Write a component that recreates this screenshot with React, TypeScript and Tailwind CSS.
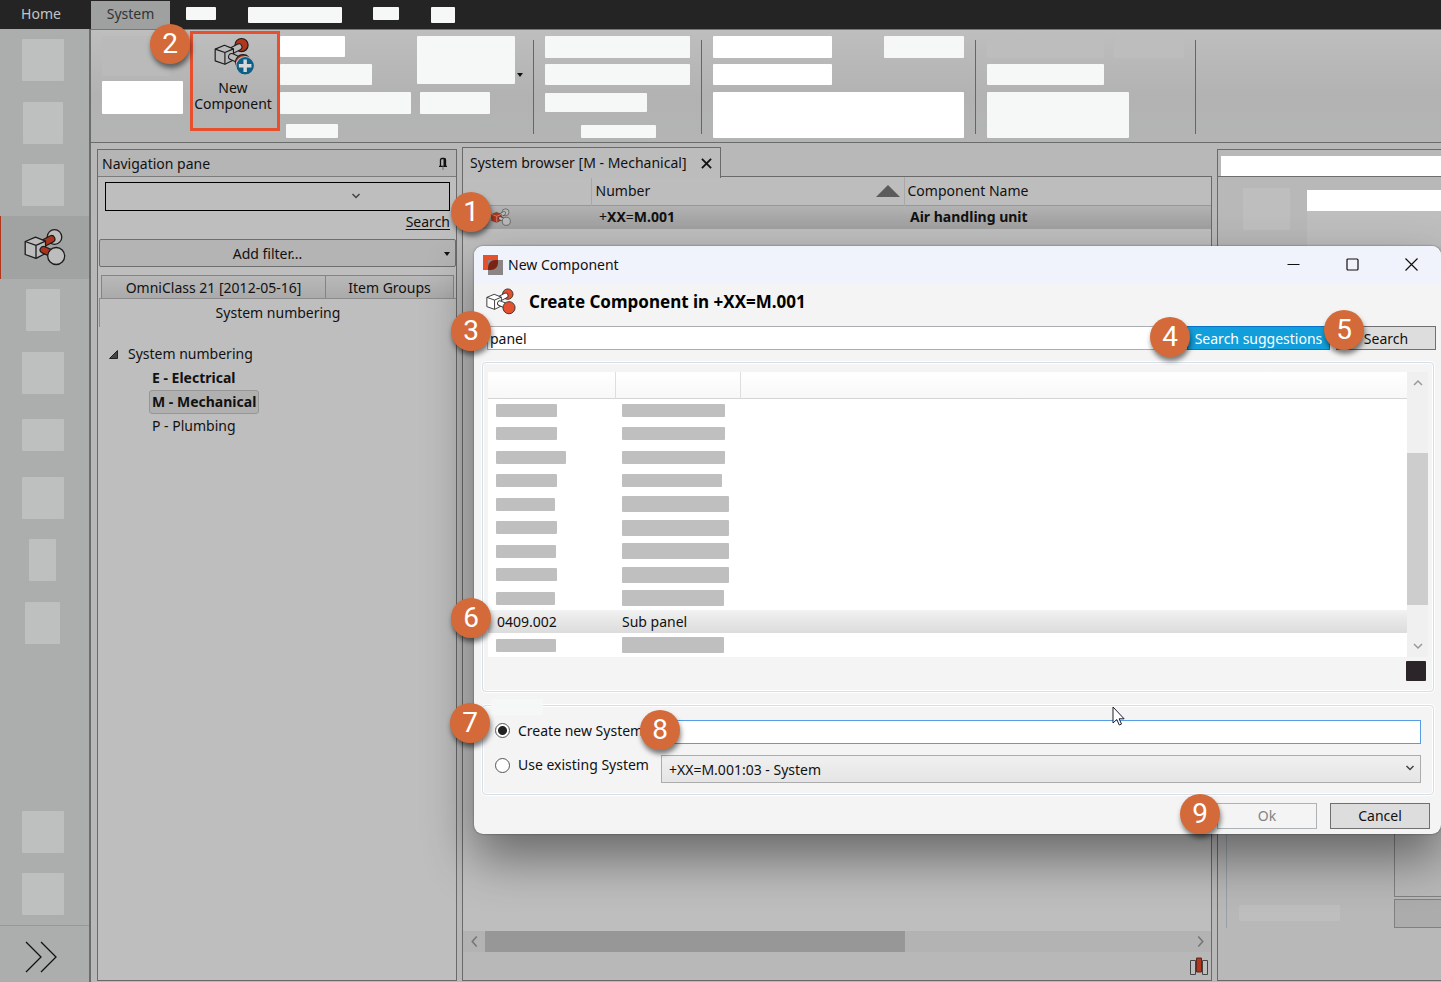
import React from "react";

type IconProps = {
  className?: string;
  cube: string;
  rod: string;
  topBall: string;
  bottomBall: string;
  edge?: string;
  mark?: string;
  add?: boolean;
};

function ComponentIcon({ className, cube, rod, topBall, bottomBall, edge = "#1c1c1c", mark, add }: IconProps) {
  return (
    <svg viewBox="0 0 42 40" className={className} fill="none" strokeLinejoin="round" overflow="visible" aria-hidden="true">
      <circle cx="30.5" cy="9" r="7.3" fill={topBall} stroke={edge} strokeWidth="1.3" />
      <path d="m19 15.500 8.500-4.500" stroke={edge} strokeWidth="8" strokeLinecap="round" />
      <path d="m19 15.500 8.500-4.500" stroke={rod} strokeWidth="5.600" strokeLinecap="round" />
      <path d="M1.200 13.500 11.500 9.200 21.500 13.200V25.500L12 30.300 1.200 26.500Z" fill={cube} stroke={edge} strokeWidth="1.3" />
      <path d="M1.200 13.500 12 17.300 21.500 13.200M12 17.300V30.300" stroke={mark ?? edge} strokeWidth="1.3" />
      <path d="m19.500 21.800 8.500 3.700" stroke={edge} strokeWidth="8" strokeLinecap="round" />
      <path d="m19.500 21.800 8.500 3.700" stroke={rod} strokeWidth="5.600" strokeLinecap="round" />
      <circle cx="32.2" cy="28" r="8.5" fill={bottomBall} stroke={edge} strokeWidth="1.3" />
      {add && (
        <g>
          <circle cx="34.500" cy="32" r="10.300" fill="#0d5f86" stroke="#bababa" strokeWidth="1.2" />
          <path d="M34.500 25v14M27.500 32h14" stroke="#d5d9db" strokeWidth="3.8" />
        </g>
      )}
    </svg>
  );
}

function Chevron({ className, d }: { className: string; d: string }) {
  return (
    <svg viewBox="0 0 10 10" className={className} fill="none" stroke="currentColor" strokeWidth="1.5" aria-hidden="true">
      <path d={d} />
    </svg>
  );
}

function Caret({ className }: { className: string }) {
  return (
    <svg viewBox="0 0 6 4" className={className} aria-hidden="true">
      <path d="M0 0h6L3 4Z" fill="#111" />
    </svg>
  );
}

function Badge({ n, className }: { n: number; className: string }) {
  return (
    <span
      className={`absolute z-20 flex size-10 items-center justify-center rounded-full bg-[#d46a39] font-[Roboto,sans-serif] text-[28px] leading-none text-white shadow-[1px_4px_5px_rgba(0,0,0,0.5)] ${className}`}
    >
      {n}
    </span>
  );
}

const Block = ({ className }: { className: string }) => <div className={`shrink-0 rounded-[1px] ${className}`} />;

const Divider = () => <div className="mt-[10px] h-[94px] w-px shrink-0 bg-[#666]" />;

const sideSlots = [
  "h-[42px] w-[42px]",
  "h-[42px] w-[40px]",
  "h-[42px] w-[42px]",
  "active",
  "h-[42px] w-[34px]",
  "h-[42px] w-[42px]",
  "h-[32px] w-[42px]",
  "h-[42px] w-[42px]",
  "h-[42px] w-[27px]",
  "h-[42px] w-[35px]",
];

function Sidebar() {
  return (
    <nav className="flex w-[91px] shrink-0 flex-col border-r-2 border-[#6b6d6d] bg-[#abaead]">
      {sideSlots.map((s, i) =>
        s === "active" ? (
          <button
            key={i}
            aria-label="Components"
            className="flex h-[63px] items-center justify-center border-l border-[#b0361c] bg-[#a0a3a2]"
          >
            <ComponentIcon className="h-10 w-[42px]" cube="#bdbdbd" rod="#ab341c" topBall="#bdbdbd" bottomBall="#bdbdbd" />
          </button>
        ) : (
          <div key={i} className="flex items-center justify-center pr-1 odd:h-[62px] even:h-[63px]">
            <Block className={`bg-[#bebfbf] ${s}`} />
          </div>
        )
      )}
      <div className="mt-auto flex h-[62px] items-center justify-center pr-1">
        <Block className="size-[42px] bg-[#bebfbf]" />
      </div>
      <div className="flex h-[62px] items-center justify-center pr-1">
        <Block className="size-[42px] bg-[#bebfbf]" />
      </div>
      <button aria-label="Expand" className="flex h-[57px] items-center border-t border-[#969998] pt-[6px] pl-[25px]">
        <svg viewBox="0 0 32 32" className="size-8" fill="none" stroke="#111" strokeWidth="1.3" aria-hidden="true">
          <path d="m1 1 15 15L1 31M16 1l15 15-15 15" />
        </svg>
      </button>
    </nav>
  );
}

function Ribbon() {
  return (
    <div className="flex h-[114px] shrink-0 border-t border-b border-t-[#777] border-b-[#6a6c6b] bg-linear-to-b from-[#bebebe] via-[#b2b2b2] via-60% to-[#b3b5b4]">
      <div className="flex w-[99px] flex-col gap-[5px] pt-[6px] pl-[11px]">
        <Block className="h-10 w-[68px] bg-[#bababa]" />
        <Block className="h-[33px] w-[81px] bg-white" />
      </div>
      <div className="relative mt-px h-[100px] w-[90px] shrink-0">
        <button className="flex size-full flex-col items-center justify-start border-[3px] border-[#e6502f] pt-[3px] pr-1 text-center">
          <ComponentIcon
            className="h-9 w-[38px]"
            cube="#bababa"
            rod="#bababa"
            topBall="#b0361c"
            bottomBall="#b0361c"
            add
          />
          <span className="mt-[7px] flex flex-col items-center leading-4">
            <span>New</span>
            <span>Component</span>
          </span>
        </button>
        <Badge n={2} className="top-[-7px] left-[-40px]" />
      </div>
      <div className="flex w-[137px] flex-col pt-[6px]">
        <Block className="h-[21px] w-[65px] bg-white" />
        <Block className="mt-[7px] h-[21px] w-[92px] bg-[#f6f8f7]" />
        <Block className="mt-[7px] h-[22px] w-[131px] bg-[#f6f8f7]" />
        <Block className="mt-[10px] ml-[6px] h-[14px] w-[52px] bg-[#f6f8f7]" />
      </div>
      <div className="flex w-[116px] flex-col gap-2 pt-[6px]">
        <div className="flex items-end gap-[2px]">
          <Block className="h-12 w-[98px] bg-[#f6f8f7]" />
          <Caret className="mb-[7px] h-1 w-[6px]" />
        </div>
        <Block className="ml-[3px] h-[22px] w-[70px] bg-[#f6f8f7]" />
      </div>
      <Divider />
      <div className="flex w-[167px] flex-col pt-[6px] pl-[11px]">
        <Block className="h-[22px] w-[145px] bg-[#f6f8f7]" />
        <Block className="mt-[6px] h-[21px] w-[145px] bg-[#f6f8f7]" />
        <Block className="mt-2 h-[19px] w-[102px] bg-[#f6f8f7]" />
        <Block className="mt-[13px] ml-9 h-[13px] w-[75px] bg-[#f6f8f7]" />
      </div>
      <Divider />
      <div className="flex w-[273px] flex-col pt-[6px] pl-[11px]">
        <div className="flex gap-[52px]">
          <Block className="h-[22px] w-[119px] bg-white" />
          <Block className="h-[22px] w-[80px] bg-[#f6f8f7]" />
        </div>
        <Block className="mt-[6px] h-[21px] w-[119px] bg-white" />
        <Block className="mt-[7px] h-[46px] w-[251px] bg-white" />
      </div>
      <Divider />
      <div className="flex w-[219px] flex-col pt-[6px] pl-[11px]">
        <div className="flex gap-[10px]">
          <Block className="h-[22px] w-[117px] bg-[#bdbdbd]" />
          <Block className="h-[22px] w-[70px] bg-[#bdbdbd]" />
        </div>
        <Block className="mt-[6px] h-[21px] w-[117px] bg-[#f6f8f7]" />
        <Block className="mt-[7px] h-[46px] w-[142px] bg-[#f6f8f7]" />
      </div>
      <Divider />
    </div>
  );
}

function NavigationPane() {
  return (
    <section className="mt-[2px] flex w-[360px] shrink-0 flex-col border border-[#6a6a6a] bg-[#bebebe]">
      <header className="flex h-[27px] items-center justify-between border-b border-[#7c7c7c] bg-[#b5b5b5] pt-px pr-2 pl-1">
        <h2>Navigation pane</h2>
        <svg viewBox="0 0 10 14" className="h-[14px] w-[10px]" aria-hidden="true">
          <path d="M2.5 9V3q0-1.500 1.500-1.500h2q1.500 0 1.500 1.500V9M1 9.3h8" fill="none" stroke="#111" strokeWidth="1.3" />
          <path d="M5.5 1.5h2V9h-2Z" fill="#111" />
          <path d="M5 9.5V13" stroke="#777" strokeWidth="1.2" />
        </svg>
      </header>
      <div className="relative mx-[6px] mt-[5px] ml-[7px]">
        <input aria-label="Filter" className="block h-[29px] w-full border border-black bg-transparent px-2 outline-none" />
        <Chevron className="absolute top-[9px] left-[246px] size-[10px] text-[#444]" d="M1.500 3 5 6.500 8.500 3" />
      </div>
      <a href="#search" className="mr-[6px] flex h-[22px] items-center self-end underline underline-offset-2">
        Search
      </a>
      <button className="relative mt-[6px] ml-px flex h-7 items-center justify-center rounded-[2px] border border-[#6e6e6e] bg-[#b4b4b4] pt-px pr-5">
        Add filter...
        <Caret className="absolute top-3 right-[5px] h-1 w-[6px]" />
      </button>
      <div className="mt-2 mr-[2px] ml-[3px] flex h-[23px]">
        <button className="w-[225px] border border-b-0 border-[#848484] bg-linear-to-b from-[#b9b9b9] to-[#aaa] pt-[2px]">
          OmniClass 21 [2012-05-16]
        </button>
        <button className="flex-1 border border-b-0 border-l-0 border-[#848484] bg-linear-to-b from-[#b9b9b9] to-[#aaa] pt-[2px]">
          Item Groups
        </button>
      </div>
      <button className="ml-px h-[29px] border-t border-l border-[#8c8c8c]">System numbering</button>
      <ul className="mt-[15px] ml-[11px] leading-6">
        <li>
          <div className="flex items-center gap-[10px]">
            <svg viewBox="0 0 9 9" className="size-[9px]" aria-hidden="true">
              <path d="M8.500.5v8H.5Z" fill="#444" stroke="#222" />
            </svg>
            System numbering
          </div>
          <ul className="ml-10">
            <li className="pl-[3px] font-bold">E - Electrical</li>
            <li className="flex">
              <span className="rounded-[3px] border border-[#969696] bg-[#b0b0b0] px-[2px] leading-[22px] font-bold">
                M - Mechanical
              </span>
            </li>
            <li className="pl-[3px]">P - Plumbing</li>
          </ul>
        </li>
      </ul>
    </section>
  );
}

function SystemBrowser() {
  return (
    <section className="flex min-w-0 flex-1 flex-col">
      <div className="flex h-[29px]">
        <div className="relative z-10 -mb-[2px] flex w-[259px] items-center justify-between border border-b-0 border-[#6a6a6a] bg-[#bcbcbc] pr-2 pl-[7px]">
          <h2>System browser [M - Mechanical]</h2>
          <button aria-label="Close tab">
            <svg viewBox="0 0 12 12" className="size-[11px]" aria-hidden="true">
              <path d="m1 1 10 10M11 1 1 11" stroke="#111" strokeWidth="2" />
            </svg>
          </button>
        </div>
      </div>
      <div className="relative flex flex-1 flex-col border border-[#6a6a6a] bg-[#bebebe]">
        <table className="w-full table-fixed border-collapse text-left">
          <thead className="bg-[#bdbdbd]">
            <tr className="h-[28px] border-b border-[#979797]">
              <th className="w-[128px]" />
              <th className="w-[313px] border-x border-[#a8a8a8] px-1 font-normal">
                <div className="flex items-center justify-between">
                  Number
                  <svg viewBox="0 0 24 12" className="h-3 w-6" aria-hidden="true">
                    <path d="M0 12 12 0l12 12Z" fill="#5b5b5b" />
                  </svg>
                </div>
              </th>
              <th className="px-[3px] font-normal">Component Name</th>
            </tr>
          </thead>
          <tbody>
            <tr className="h-6 bg-linear-to-b from-[#b3b3b3] via-[#a8a8a8] via-50% to-[#a0a0a0] font-bold">
              <td className="pl-7">
                <ComponentIcon
                  className="h-[19px] w-5"
                  cube="#b0361c"
                  rod="#b8b8b8"
                  topBall="#b8b8b8"
                  bottomBall="#b8b8b8"
                  edge="#444"
                  mark="#d9a79b"
                />
              </td>
              <td className="pl-2">
                <span className="font-normal">+</span>XX<span className="font-normal">=</span>M.001
              </td>
              <td className="pl-[6px]">Air handling unit</td>
            </tr>
          </tbody>
        </table>
        <Badge n={1} className="top-[15px] left-[-12px]" />
        <div className="mt-auto flex h-[21px] items-center bg-[#b3b3b3]">
          <div className="flex w-[22px] justify-center">
            <Chevron className="size-[11px] text-[#777]" d="M7 0.500 3 5l4 4.500" />
          </div>
          <div className="h-full w-[420px] bg-[#979797]" />
          <Chevron className="mr-[5px] ml-auto size-[11px] text-[#777]" d="m3 0.500 4 4.500-4 4.500" />
        </div>
        <div className="flex h-7 items-center justify-end bg-[#b8b8b8] pr-[3px]">
          <svg viewBox="0 0 18 19" className="h-[19px] w-[18px]" aria-hidden="true">
            <path d="M.5 3.500h5v14h-5ZM12.500 3.500h5v14h-5Z" fill="#bebebe" stroke="#444" />
            <path d="M6.500 1h5v14h-5Z" fill="#b0361c" stroke="#5a2a20" />
          </svg>
        </div>
      </div>
    </section>
  );
}

function DetailPane() {
  return (
    <section className="mt-[2px] flex w-[224px] shrink-0 flex-col border border-r-0 border-[#6a6a6a] bg-[#b8b8b8]">
      <div className="h-[27px] border-b border-[#6e6e6e] pt-[6px] pl-[3px]">
        <div className="h-5 bg-white" />
      </div>
      <div className="flex justify-between pl-[25px]">
        <Block className="mt-[11px] h-[42px] w-[47px] bg-[#bebebe]" />
        <div className="mt-[13px] w-[134px] bg-[#bebebe]">
          <div className="h-[21px] bg-white" />
          <div className="h-[36px]" />
        </div>
      </div>
      <div className="mt-auto mb-[52px] ml-2 flex justify-between border-l border-[#96a0a6]">
        <Block className="mt-[77px] mb-[7px] ml-3 h-4 w-[101px] self-end bg-[#bebebe]" />
        <div className="flex w-[47px] flex-col gap-[2px]">
          <div className="h-[72px] border border-r-0 border-[#808080]" />
          <div className="h-[29px] border border-r-0 border-[#808080] bg-[#acacac]" />
        </div>
      </div>
    </section>
  );
}

const suggestionBars: ([string, string] | null)[] = [
  ["w-[61px]", "h-[13px] w-[103px]"],
  ["w-[61px]", "h-[13px] w-[103px]"],
  ["w-[70px]", "h-[13px] w-[103px]"],
  ["w-[61px]", "h-[13px] w-[100px]"],
  ["w-[59px]", "h-4 w-[107px]"],
  ["w-[61px]", "h-4 w-[107px]"],
  ["w-[60px]", "h-4 w-[107px]"],
  ["w-[61px]", "h-4 w-[107px]"],
  ["w-[59px]", "h-4 w-[102px]"],
  null,
  ["w-[60px]", "h-4 w-[102px]"],
];

function SuggestionList() {
  return (
    <fieldset className="mt-3 mr-[7px] ml-2 rounded-[4px] border border-[#d5dfe5] bg-[#f4f4f4] pt-[9px] pr-[5px] pb-[10px] pl-[5px] shadow-[inset_0_0_0_1px_#fff,0_0_0_1px_#fff]">
      <div className="flex h-[285px] bg-white">
        <table className="flex-1 table-fixed border-collapse self-start text-left">
          <thead className="bg-linear-to-b from-white to-[#f8f8f9]">
            <tr className="h-[26px] border-b border-[#d5d5d5]">
              <th className="w-[127px] border-r border-[#dedede] p-0" />
              <th className="w-[125px] border-r border-[#dedede] p-0" />
              <th className="p-0" />
            </tr>
          </thead>
          <tbody>
            {suggestionBars.map((row, i) =>
              row ? (
                <tr key={i} className="odd:h-6 even:h-[23px]">
                  <td className="p-0 pl-2">
                    <Block className={`h-[13px] bg-[#bfbfbf] ${row[0]}`} />
                  </td>
                  <td className="p-0 pl-[7px]">
                    <Block className={`bg-[#bfbfbf] ${row[1]}`} />
                  </td>
                  <td className="p-0" />
                </tr>
              ) : (
                <tr
                  key={i}
                  className="bg-linear-to-b from-[#f2f2f2] via-[#e6e6e6] via-50% to-[#dcdcdc] leading-5 odd:h-6 even:h-[23px]"
                >
                  <td className="p-0 pl-[9px]">0409.002</td>
                  <td className="p-0 pl-[7px]">Sub panel</td>
                  <td className="p-0" />
                </tr>
              )
            )}
          </tbody>
        </table>
        <div className="flex w-[21px] flex-col items-center bg-[#f0f0f0] py-[6px]">
          <Chevron className="size-[10px] text-[#999]" d="m1 7 4-4 4 4" />
          <div className="mt-[65px] h-[152px] w-full bg-[#cdcdcd]" />
          <Chevron className="mt-auto size-[10px] text-[#999]" d="m1 3 4 4 4-4" />
        </div>
      </div>
      <div className="mt-1 mr-[2px] ml-auto size-5 rounded-[1px] bg-[#2b2429]" />
    </fieldset>
  );
}

const radioClass =
  "size-[15px] shrink-0 appearance-none rounded-full border border-[#555] bg-white checked:bg-[radial-gradient(circle,#222_4px,#fff_5px)]";

function SystemChoice() {
  return (
    <fieldset className="relative mt-[13px] mr-[7px] ml-2 rounded-[4px] border border-[#d5dfe5] px-3 pt-[14px] pb-[11px] shadow-[inset_0_0_0_1px_#fff,0_0_0_1px_#fff]">
      <div className="absolute top-[-7px] left-2 h-4 w-[52px] bg-[#f6f8f7]" />
      <div className="flex h-6 items-center">
        <label className="flex w-[166px] items-center gap-2 pb-[3px] whitespace-nowrap">
          <input type="radio" name="system" defaultChecked className={radioClass} />
          Create new System
        </label>
        <input aria-label="System name" className="h-6 min-w-0 flex-1 border border-[#569de5] bg-white px-2 outline-none" />
      </div>
      <div className="mt-[11px] flex h-7 items-center">
        <label className="flex w-[166px] items-center gap-2 pb-2 whitespace-nowrap">
          <input type="radio" name="system" className={radioClass} />
          Use existing System
        </label>
        <div className="relative flex-1">
          <select
            aria-label="Existing system"
            className="block h-7 w-full appearance-none border border-[#acacac] bg-linear-to-b from-[#f0f0f0] to-[#e5e5e5] px-[7px] pt-px outline-none"
          >
            <option>+XX=M.001:03 - System</option>
          </select>
          <Chevron className="absolute top-2 right-[6px] size-[10px] text-[#444]" d="M1.500 3 5 6.500 8.500 3" />
        </div>
      </div>
    </fieldset>
  );
}

function NewComponentDialog() {
  return (
    <div
      role="dialog"
      aria-label="New Component"
      className="absolute top-[246px] right-0 left-[474px] flex h-[588px] flex-col rounded-[9px] bg-[#f4f4f4] shadow-[0_24px_50px_rgba(0,0,0,0.45),0_0_2px_rgba(0,0,0,0.5)]"
    >
      <header className="flex h-[37px] shrink-0 items-center rounded-t-[9px] bg-[#f0f3fb] pr-[23px] pl-[9px]">
        <svg viewBox="0 0 20 20" className="mr-[5px] size-5" aria-hidden="true">
          <path d="M0 0h15v15H0Z" fill="#e5502d" />
          <path d="M5 5h15v15H5Z" fill="#8b8685" />
          <path d="M15 5v3a7 7 0 0 1-7 7H5v-3a7 7 0 0 1 7-7Z" fill="#7b2415" />
        </svg>
        <h1>New Component</h1>
        <div className="ml-auto flex gap-[46px]">
          <button aria-label="Minimize">
            <svg viewBox="0 0 13 13" className="size-[13px]" fill="none" stroke="#111" aria-hidden="true">
              <path d="M.5 6.500h12" />
            </svg>
          </button>
          <button aria-label="Maximize">
            <svg viewBox="0 0 13 13" className="size-[13px]" fill="none" stroke="#111" strokeWidth="1.200" aria-hidden="true">
              <rect x="1" y="1" width="11" height="11" rx="1" />
            </svg>
          </button>
          <button aria-label="Close">
            <svg viewBox="0 0 13 13" className="size-[13px]" fill="none" stroke="#111" strokeWidth="1.200" aria-hidden="true">
              <path d="m.5.500 12 12M12.500.5l-12 12" />
            </svg>
          </button>
        </div>
      </header>
      <div className="flex h-[43px] items-center gap-[13px] pb-[5px] pl-3">
        <ComponentIcon className="size-[30px]" cube="#fff" rod="#fff" topBall="#e5502d" bottomBall="#e5502d" edge="#333" />
        <h2 className="text-[17px] font-bold text-black">Create Component in +XX=M.001</h2>
      </div>
      <div className="flex h-6 pr-[5px] pl-[13px]">
        <input
          aria-label="Search text"
          defaultValue="panel"
          className="min-w-0 flex-1 border border-r-0 border-[#abadb3] bg-white px-[2px] pt-px outline-none"
        />
        <button className="w-[143px] border border-[#0a74c8] bg-[#119edb] pt-px text-white">Search suggestions</button>
        <button className="ml-[6px] w-[100px] border border-[#707070] bg-[#ddd] pt-px">Search</button>
      </div>
      <SuggestionList />
      <SystemChoice />
      <footer className="mt-2 flex h-[26px] justify-end gap-[13px] pr-[11px]">
        <button disabled className="w-[100px] border border-[#adb2b5] bg-[#f4f4f4] text-[#838383]">
          Ok
        </button>
        <button className="w-[100px] border border-[#707070] bg-[#ddd]">Cancel</button>
      </footer>

      <Badge n={3} className="top-[65px] left-[-23px]" />
      <Badge n={4} className="top-[71px] right-[251px]" />
      <Badge n={5} className="top-[64px] right-[77px]" />
      <Badge n={6} className="top-[352px] left-[-23px]" />
      <Badge n={7} className="top-[457px] left-[-24px]" />
      <Badge n={8} className="top-[464px] left-[166px]" />
      <Badge n={9} className="top-[548px] right-[221px]" />
      <svg viewBox="0 0 13 20" className="absolute top-[460px] right-[316px] h-5 w-[13px]" aria-hidden="true">
        <path d="M1 1v16l3.800-3.500L7.300 19l2.200-1-2.400-5.200h5Z" fill="#fff" stroke="#1d1d2b" />
      </svg>
    </div>
  );
}

export default function App() {
  return (
    <div className="relative flex min-h-screen flex-col overflow-hidden bg-[#b8b8b8] font-['Noto_Sans',sans-serif] text-[14px] leading-5 text-[#111]">
      <div className="flex h-[29px] shrink-0 bg-[#242424]">
        <button className="w-[91px] pr-[9px] pb-px text-[#c4c4c4]">Home</button>
        <button className="mt-px w-[79px] bg-[#9ea1a0] pb-[2px] text-[#333]">System</button>
        <Block className="mt-[7px] ml-4 h-[13px] w-[30px] bg-[#f6f8f7]" />
        <Block className="mt-[7px] ml-8 h-4 w-[94px] bg-[#f6f8f7]" />
        <Block className="mt-[7px] ml-[31px] h-[13px] w-[26px] bg-[#f6f8f7]" />
        <Block className="mt-[7px] ml-8 h-4 w-6 bg-[#f6f8f7]" />
      </div>
      <div className="flex flex-1">
        <Sidebar />
        <div className="flex min-w-0 flex-1 flex-col">
          <Ribbon />
          <main className="flex flex-1 gap-[5px] pt-1 pb-px pl-[6px]">
            <NavigationPane />
            <SystemBrowser />
            <DetailPane />
          </main>
        </div>
      </div>
      <NewComponentDialog />
    </div>
  );
}
